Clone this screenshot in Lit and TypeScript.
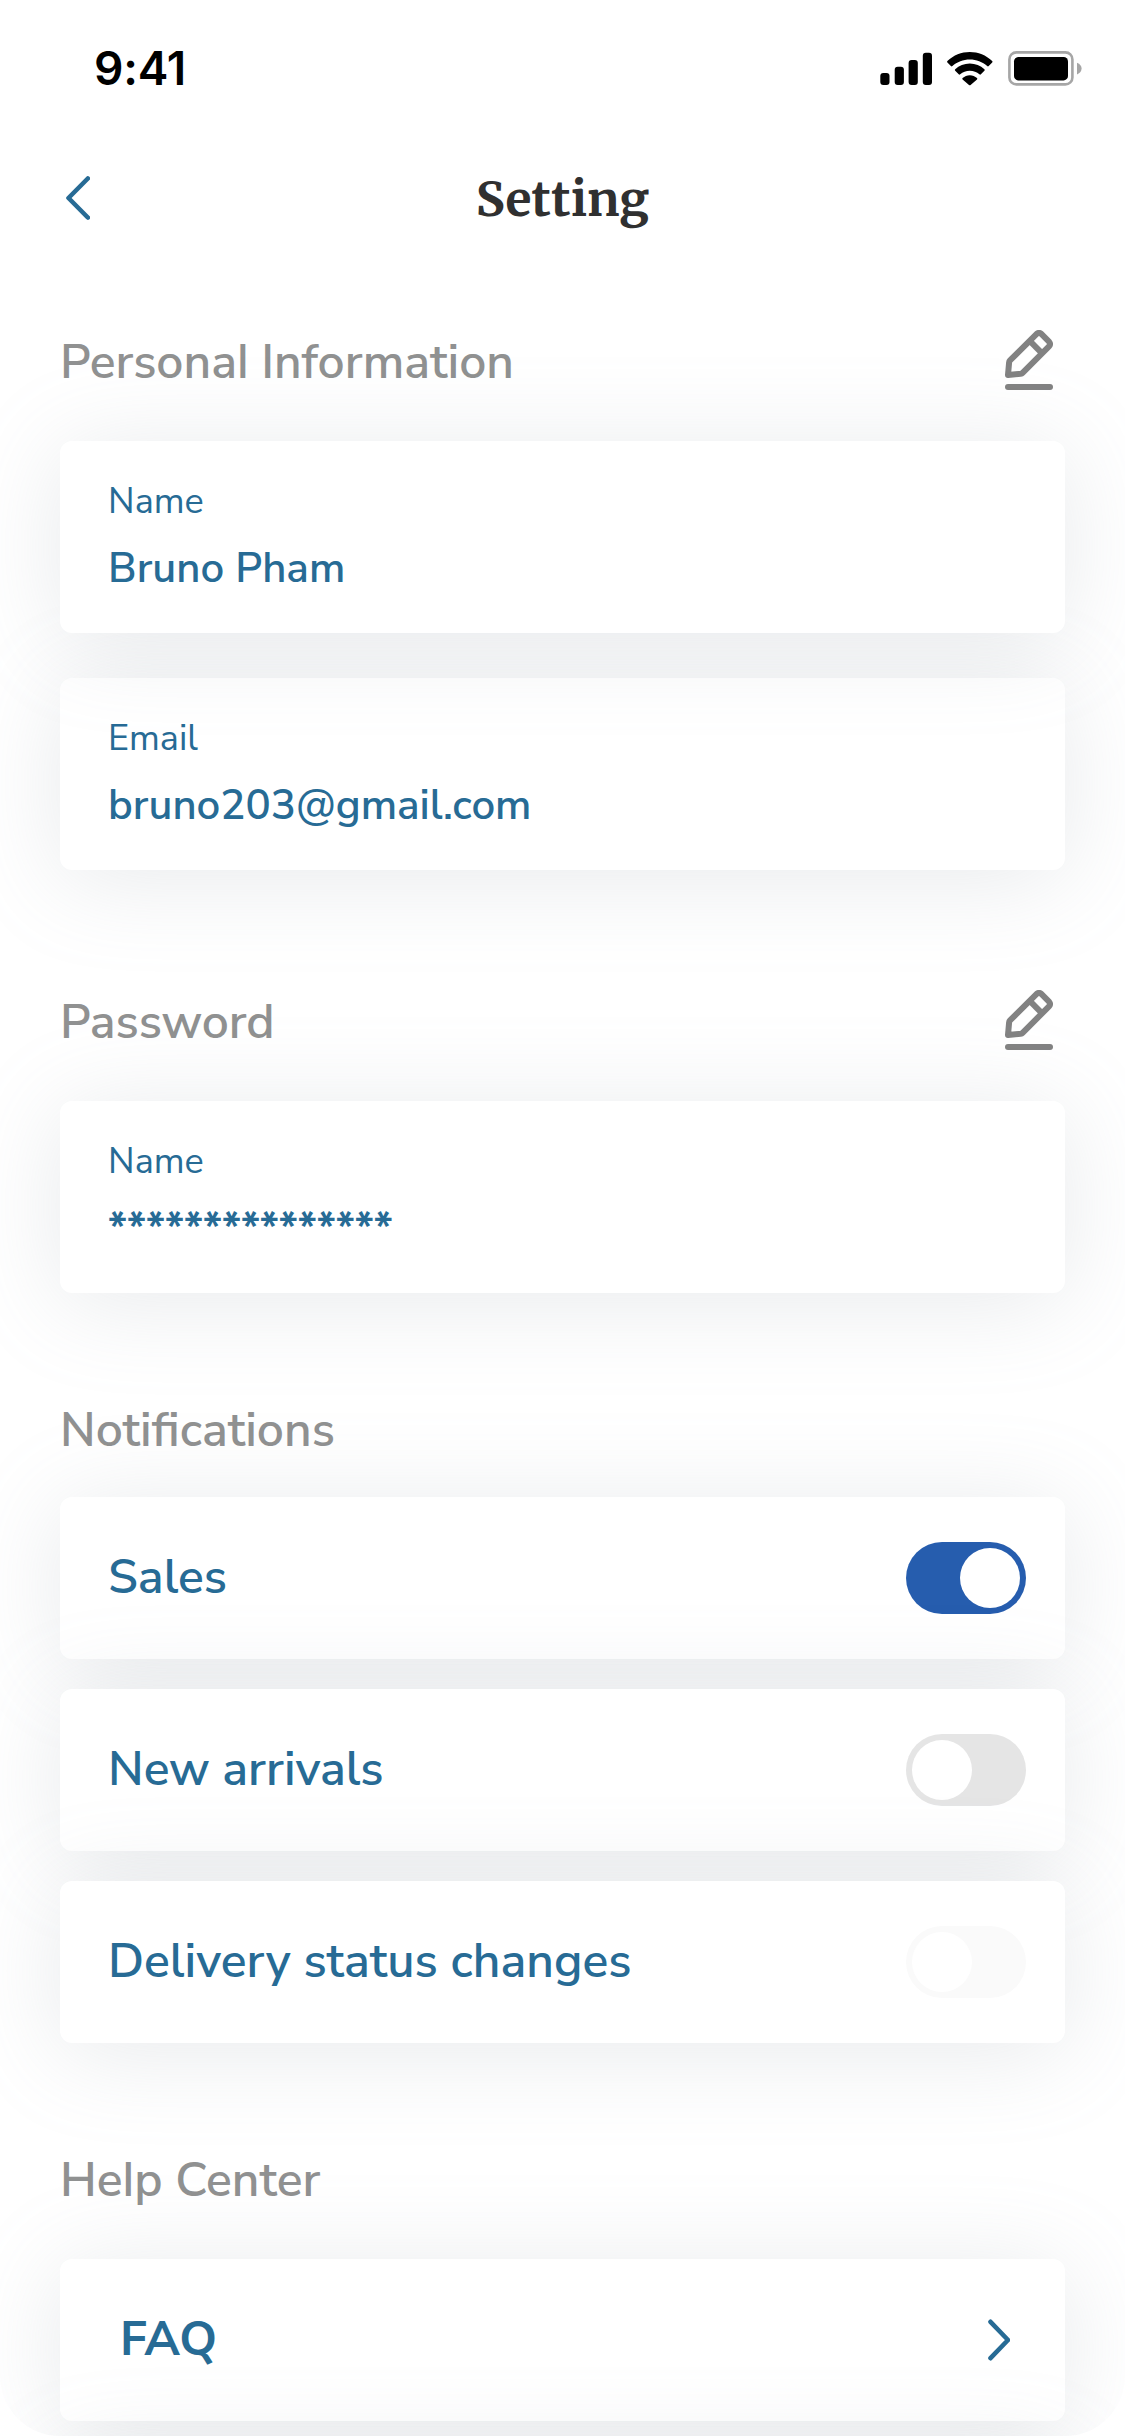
import { LitElement, html, css, svg, nothing } from "lit";
import { customElement, property, state } from "lit/decorators.js";
import { classMap } from "lit/directives/class-map.js";

const pencil = html`<svg width="48" height="60" viewBox="0 0 48 60" fill="none" stroke="#828282" stroke-width="6" stroke-linejoin="round" stroke-linecap="round">
  <path d="M3 45 L4.1 32.4 Q4.2 31.2 5 30.4 L31.7 3.9 Q34 2 36.3 3.9 L44 11.6 Q46 14 44 16.4 L17.6 42.8 Q16.8 43.6 15.6 43.8 Z" />
  <path d="M25.2 11.4 L36.6 22.8" stroke-linecap="butt" />
  <path d="M3 57 H45" />
</svg>`;

@customElement("status-bar")
export class StatusBar extends LitElement {
  static styles = css`
    :host { display: flex; justify-content: space-between; align-items: flex-start; height: 88px; padding: 44px 43px 0 94px; }
    .time { font: 600 46px/46px Inter, "Liberation Sans", sans-serif; color: #000; letter-spacing: -0.2px; padding-top: 1px; }
    svg { display: block; margin-top: 7px; }
  `;
  render() {
    return html`
      <span class="time">9:41</span>
      <svg width="202" height="35" viewBox="0 0 202 35">
        <rect x="0.3" y="22" width="9.2" height="12" rx="3" />
        <rect x="14.7" y="15.8" width="9.2" height="18.2" rx="3" />
        <rect x="28.6" y="9" width="9.2" height="25" rx="3" />
        <rect x="42.8" y="1.7" width="9.2" height="32.3" rx="3" />
        <g transform="translate(66.8 1)">
          <path d="M23 0C14.6 0 6.7 3.2 .6 9Q-.1 9.8 .6 10.5L4.1 14Q4.8 14.8 5.6 14C10.2 9.8 16.5 7.4 23 7.4C29.5 7.4 35.8 9.8 40.4 14Q41.2 14.8 41.9 14L45.4 10.5Q46.1 9.8 45.4 9C39.3 3.2 31.4 0 23 0Z" />
          <path d="M23 11.6C17.4 11.6 12.3 13.8 8.4 17.2Q7.6 18 8.4 18.8L11.9 22.3Q12.6 23 13.4 22.3C16 20 19.3 18.8 23 18.8C26.7 18.8 30 20 32.6 22.3Q33.4 23 34.1 22.3L37.6 18.8Q38.4 18 37.6 17.2C33.7 13.8 28.6 11.6 23 11.6Z" />
          <path d="M23 23.2C20.3 23.2 17.8 24.3 15.8 26Q15.1 26.7 15.8 27.4L22.2 33Q23 33.7 23.8 33L30.2 27.4Q30.9 26.7 30.2 26C28.2 24.3 25.7 23.2 23 23.2Z" />
        </g>
        <rect x="129.4" y="1.4" width="63" height="32" rx="7" fill="none" stroke="#a6a6a6" stroke-width="2.6" />
        <rect x="134" y="6" width="54" height="23.4" rx="4.4" />
        <path d="M197 11.7V23.4Q201.6 21.4 201.6 17.5Q201.6 13.7 197 11.7Z" fill="#a6a6a6" />
      </svg>
    `;
  }
}

@customElement("section-heading")
export class SectionHeading extends LitElement {
  @property() label = "";
  @property({ type: Boolean }) editable = false;
  static styles = css`
    :host { display: flex; justify-content: space-between; align-items: flex-start; height: 66px; padding-right: 12px; }
    /* ss02 selects the straight lowercase l */
    .label { font: 570 48px/66px "Nunito Sans", Nunito, "Open Sans", sans-serif; font-feature-settings: "ss02"; color: #909191; white-space: nowrap; }
    svg { display: block; margin-top: 1px; }
  `;
  render() {
    return html`<span class="label">${this.label}</span>${this.editable ? pencil : nothing}`;
  }
}

@customElement("toggle-switch")
export class ToggleSwitch extends LitElement {
  @property({ type: Boolean }) on = false;
  @property({ type: Boolean }) disabled = false;
  static styles = css`
    .track { display: flex; box-sizing: border-box; width: 120px; height: 72px; padding: 6px; border-radius: 36px; background: #e5e5e5; }
    .on { background: #265dae; justify-content: flex-end; }
    .disabled { background: #fafafa; }
    .knob { width: 60px; height: 60px; border-radius: 50%; background: #fff; }
  `;
  render() {
    return html`<div class=${classMap({ track: true, on: this.on, disabled: this.disabled })} role="switch" aria-checked=${this.on}>
      <div class="knob"></div>
    </div>`;
  }
}

@customElement("app-root")
export class AppRoot extends LitElement {
  @state() private personal = [
    { label: "Name", value: "Bruno Pham" },
    { label: "Email", value: "bruno203@gmail.com" },
  ];
  @state() private password = [{ label: "Name", value: "*".repeat(15), masked: true }];
  @state() private alerts = [
    { label: "Sales", on: true, disabled: false },
    { label: "New arrivals", on: false, disabled: false },
    { label: "Delivery status changes", on: false, disabled: true },
  ];

  static styles = css`
    :host { display: block; background: #fff; }
    .screen { width: 1125px; height: 2436px; overflow: hidden; border-radius: 0 0 60px 60px; font-family: "Nunito Sans", Nunito, "Open Sans", sans-serif; color: #276b95; }
    .nav { display: grid; grid-template-columns: 60px 1fr 60px; align-items: center; height: 132px; padding: 0 54px; }
    .nav svg { display: block; margin-left: 12px; }
    .title { margin: 2px 0 0; text-align: center; font: 700 48px/60px Merriweather, "Noto Serif", serif; color: #303030; }
    .content { display: flex; flex-direction: column; padding: 65px 60px 0; }
    .group { display: flex; flex-direction: column; margin-top: 46px; }
    .fields { gap: 45px; margin-bottom: 119px; }
    .fields.last { margin-bottom: 104px; }
    .rows { gap: 30px; margin-bottom: 104px; }
    .rows.tight { margin-top: 34px; }
    .card { box-sizing: border-box; border-radius: 12px; background: #fff; box-shadow: 0 9px 96px rgba(138, 149, 158, 0.2); }
    .field { height: 192px; padding: 37px 48px 0; position: relative; z-index: 0; }
    .field:first-child { z-index: 1; }
    .label { font-size: 36px; line-height: 48px; font-weight: 370; }
    .value { margin-top: 18px; font-size: 42px; line-height: 50px; font-weight: 600; }
    .masked { font-weight: 700; }
    .row { display: flex; align-items: center; justify-content: space-between; height: 162px; padding: 0 39px 0 48px; font-size: 48px; line-height: 66px; font-weight: 600; }
    .row > span { padding-bottom: 2px; }
    .link { padding: 0 55px 0 60px; font-weight: 700; }
  `;

  private fields(items: { label: string; value: string; masked?: boolean }[]) {
    return items.map(
      (f) => html`<div class="card field">
        <div class="label">${f.label}</div>
        <div class=${classMap({ value: true, masked: !!f.masked })}>${f.value}</div>
      </div>`
    );
  }

  private chevron(points: string, w: number, h: number) {
    return html`<svg width=${w} height=${h} viewBox="0 0 ${w} ${h}" fill="none" stroke="#276b95" stroke-width="4.6" stroke-linecap="round" stroke-linejoin="round">
      ${svg`<polyline points=${points} />`}
    </svg>`;
  }

  render() {
    return html`
      <main class="screen">
        <status-bar></status-bar>
        <header class="nav">
          ${this.chevron("21.8,2.5 2.5,22 21.8,41.5", 24, 44)}
          <h1 class="title">Setting</h1>
        </header>
        <div class="content">
          <section-heading label="Personal Information" editable></section-heading>
          <div class="group fields">${this.fields(this.personal)}</div>

          <section-heading label="Password" editable></section-heading>
          <div class="group fields last">${this.fields(this.password)}</div>

          <section-heading label="Notifications"></section-heading>
          <div class="group rows tight">
            ${this.alerts.map(
              (a) => html`<div class="card row">
                <span>${a.label}</span>
                <toggle-switch ?on=${a.on} ?disabled=${a.disabled}></toggle-switch>
              </div>`
            )}
          </div>

          <section-heading label="Help Center"></section-heading>
          <div class="group rows">
            <div class="card row link">
              <span>FAQ</span>
              ${this.chevron("2.5,2.8 20,21 2.5,39.2", 22, 42)}
            </div>
            <div class="card row link"></div>
          </div>
        </div>
      </main>
    `;
  }
}
